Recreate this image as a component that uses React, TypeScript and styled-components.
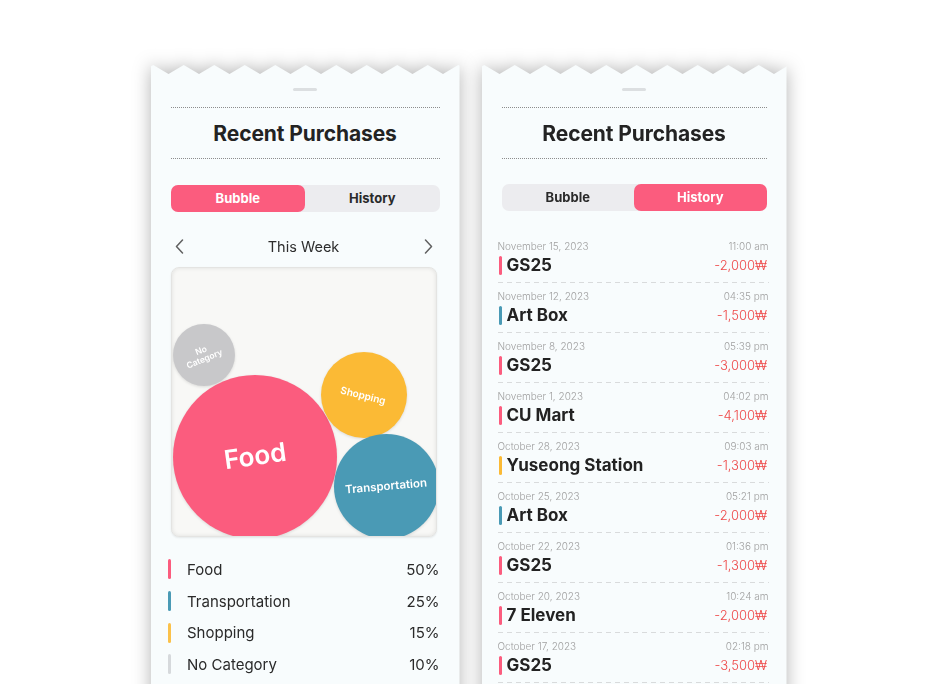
import React from "react";
import styled, { createGlobalStyle } from "styled-components";

const PINK = "#FB5C7E";
const BLUE = "#4A9AB5";
const YELLOW = "#FBBA35";
const GREY = "#C8C8CA";

const GlobalStyle = createGlobalStyle`
  html, body { margin: 0; padding: 0; background: #ffffff; }
  body {
    width: 937px;
    height: 684px;
    overflow: hidden;
    font-family: Inter, "Noto Sans", sans-serif;
    -webkit-font-smoothing: antialiased;
  }
  * { box-sizing: border-box; }
`;

function zigzag(width: number, period = 30.5, offset = 18, depth = 9): string {
  const yAt = (x: number) => {
    const d = (((x - offset) % period) + period) % period;
    const dist = Math.min(d, period - d);
    return depth * (1 - dist / (period / 2));
  };
  const pts: string[] = [`0px ${yAt(0).toFixed(2)}px`];
  const half = period / 2;
  let k = Math.ceil((0 - offset) / half);
  for (let x = offset + k * half; x < width; x = offset + ++k * half) {
    if (x <= 0) continue;
    pts.push(`${x.toFixed(2)}px ${yAt(x).toFixed(2)}px`);
  }
  pts.push(`${width}px ${yAt(width).toFixed(2)}px`);
  pts.push(`${width}px 100%`, `0px 100%`);
  return pts.join(", ");
}

const Page = styled.div`
  display: flex;
  justify-content: center;
  align-items: flex-start;
  gap: 22px;
  padding-top: 65px;
  height: 684px;
  overflow: hidden;
`;

const CardShadow = styled.div`
  filter: drop-shadow(0 0 9px rgba(0, 0, 0, 0.3));
`;

const Card = styled.div<{ $width: number }>`
  width: ${(p) => p.$width}px;
  height: 660px;
  background: #f8fcfd;
  clip-path: polygon(${(p) => zigzag(p.$width)});
  display: flex;
  flex-direction: column;
  padding: 0 20px;
`;

const Handle = styled.div`
  width: 24px;
  height: 3px;
  border-radius: 2px;
  background: #dcdfe1;
  margin: 23px auto 0;
`;

const dotted = "linear-gradient(to right, #8d8d8d 50%, transparent 50%)";

const TitleBlock = styled.div`
  margin-top: 16px;
  height: 52px;
  display: flex;
  align-items: center;
  justify-content: center;
  background-image: ${dotted}, ${dotted};
  background-size: 2px 1px, 2px 1px;
  background-position: left top, left bottom;
  background-repeat: repeat-x, repeat-x;
`;

const Title = styled.h1`
  margin: 0;
  font-size: 21px;
  font-weight: 700;
  color: #232323;
  letter-spacing: -0.1px;
`;

const Segmented = styled.div<{ $shift?: number }>`
  margin-top: ${(p) => 26 - (p.$shift ?? 0)}px;
  margin-bottom: ${(p) => p.$shift ?? 0}px;
  height: 27px;
  display: grid;
  grid-template-columns: 1fr 1fr;
  background: #ececef;
  border-radius: 7px;
`;

const SegButton = styled.div<{ $active?: boolean }>`
  display: flex;
  align-items: center;
  justify-content: center;
  border-radius: 7px;
  font-size: 13px;
  font-weight: 700;
  padding-bottom: 1px;
  background: ${(p) => (p.$active ? PINK : "transparent")};
  color: ${(p) => (p.$active ? "#ffffff" : "#2a2a2a")};
`;

const WeekRow = styled.div`
  margin-top: 22.5px;
  height: 24px;
  display: flex;
  align-items: center;
  justify-content: space-between;
  padding: 0 7px 0 4px;
`;

const WeekLabel = styled.span`
  font-size: 14.5px;
  color: #2d2d2d;
`;

const Chevron = ({ dir }: { dir: "left" | "right" }) => (
  <svg width="9" height="15" viewBox="0 0 9 15" fill="none">
    <polyline
      points={dir === "left" ? "7.5,1 1.5,7.5 7.5,14" : "1.5,1 7.5,7.5 1.5,14"}
      stroke="#606060"
      strokeWidth="1.5"
      strokeLinecap="round"
      strokeLinejoin="round"
    />
  </svg>
);

const BubblePanel = styled.div`
  position: relative;
  margin-top: 8.5px;
  margin-right: 3px;
  height: 270px;
  background: #f8f8f6;
  border: 1px solid #e4e4e2;
  border-radius: 8px;
  box-shadow: inset 0 0 4px rgba(0, 0, 0, 0.1), 0 1px 2px rgba(0, 0, 0, 0.08);
  overflow: hidden;
`;

const Bubble = styled.div<{ $x: number; $y: number; $size: number; $color: string }>`
  position: absolute;
  left: ${(p) => p.$x}px;
  top: ${(p) => p.$y}px;
  width: ${(p) => p.$size}px;
  height: ${(p) => p.$size}px;
  border-radius: 50%;
  background: ${(p) => p.$color};
  box-shadow: 0 1px 3px rgba(0, 0, 0, 0.12);
  display: flex;
  align-items: center;
  justify-content: center;
`;

const BubbleLabel = styled.span<{ $font: number; $rotate: number }>`
  color: #ffffff;
  font-size: ${(p) => p.$font}px;
  font-weight: 600;
  line-height: 1.1;
  text-align: center;
  transform: rotate(${(p) => p.$rotate}deg);
  white-space: nowrap;
`;

const Legend = styled.div`
  margin: 16.5px 0 0 -3px;
  display: flex;
  flex-direction: column;
`;

const LegendRow = styled.div`
  height: 31.7px;
  display: flex;
  align-items: center;
  font-size: 15px;
  color: #2a2a2a;
`;

const LegendBar = styled.span<{ $color: string }>`
  width: 3px;
  height: 20px;
  border-radius: 2px;
  background: ${(p) => p.$color};
  margin-right: 16.5px;
`;

const LegendName = styled.span`
  flex: 1;
`;

const List = styled.div`
  margin: 20.5px -2px 0 -4px;
  display: flex;
  flex-direction: column;
`;

const Item = styled.div`
  height: 50px;
  padding-top: 6.5px;
  background-image: linear-gradient(to right, #d9dbdc 55%, transparent 55%);
  background-size: 9px 1px;
  background-position: left bottom;
  background-repeat: repeat-x;
`;

const DateRow = styled.div`
  height: 13px;
  display: flex;
  justify-content: space-between;
  align-items: center;
  font-size: 10px;
  font-weight: 300;
  color: #a0a0a0;
`;

const NameRow = styled.div`
  margin-top: 1px;
  height: 24px;
  display: flex;
  align-items: center;
`;

const ItemBar = styled.span<{ $color: string }>`
  width: 2.5px;
  height: 19px;
  border-radius: 2px;
  margin-left: 1.5px;
  background: ${(p) => p.$color};
`;

const ItemName = styled.span`
  flex: 1;
  margin-left: 5px;
  font-size: 17px;
  font-weight: 700;
  color: #222222;
`;

const Amount = styled.span`
  font-size: 13px;
  font-weight: 300;
  color: #ee4747;
  padding-right: 1.5px;
`;

const bubbles = [
  { label: "No\nCategory", x: 1, y: 56, size: 62, color: GREY, font: 8.5, rotate: -22 },
  { label: "Food", x: 1.5, y: 106.5, size: 164, color: PINK, font: 26, rotate: -8 },
  { label: "Shopping", x: 149, y: 84, size: 86, color: YELLOW, font: 10, rotate: 14 },
  { label: "Transportation", x: 162, y: 166, size: 105, color: BLUE, font: 11.5, rotate: -5 },
];

const legend = [
  { name: "Food", pct: "50%", color: PINK },
  { name: "Transportation", pct: "25%", color: BLUE },
  { name: "Shopping", pct: "15%", color: "#FBC14A" },
  { name: "No Category", pct: "10%", color: "#D6D9DC" },
];

const history = [
  { date: "November 15, 2023", time: "11:00 am", name: "GS25", amount: "-2,000₩", color: PINK },
  { date: "November 12, 2023", time: "04:35 pm", name: "Art Box", amount: "-1,500₩", color: BLUE },
  { date: "November 8, 2023", time: "05:39 pm", name: "GS25", amount: "-3,000₩", color: PINK },
  { date: "November 1, 2023", time: "04:02 pm", name: "CU Mart", amount: "-4,100₩", color: PINK },
  { date: "October 28, 2023", time: "09:03 am", name: "Yuseong Station", amount: "-1,300₩", color: YELLOW },
  { date: "October 25, 2023", time: "05:21 pm", name: "Art Box", amount: "-2,000₩", color: BLUE },
  { date: "October 22, 2023", time: "01:36 pm", name: "GS25", amount: "-1,300₩", color: PINK },
  { date: "October 20, 2023", time: "10:24 am", name: "7 Eleven", amount: "-2,000₩", color: PINK },
  { date: "October 17, 2023", time: "02:18 pm", name: "GS25", amount: "-3,500₩", color: PINK },
];

const Header = ({ active }: { active: "bubble" | "history" }) => (
  <>
    <Handle />
    <TitleBlock>
      <Title>Recent Purchases</Title>
    </TitleBlock>
    <Segmented $shift={active === "history" ? 1 : 0}>
      <SegButton $active={active === "bubble"}>Bubble</SegButton>
      <SegButton $active={active === "history"}>History</SegButton>
    </Segmented>
  </>
);

export default function App() {
  return (
    <>
      <GlobalStyle />
      <Page>
        <CardShadow>
          <Card $width={309}>
            <Header active="bubble" />
            <WeekRow>
              <Chevron dir="left" />
              <WeekLabel>This Week</WeekLabel>
              <Chevron dir="right" />
            </WeekRow>
            <BubblePanel>
              {bubbles.map((b) => (
                <Bubble key={b.label} $x={b.x} $y={b.y} $size={b.size} $color={b.color}>
                  <BubbleLabel $font={b.font} $rotate={b.rotate}>
                    {b.label.split("\n").map((line, i) => (
                      <React.Fragment key={i}>
                        {i > 0 && <br />}
                        {line}
                      </React.Fragment>
                    ))}
                  </BubbleLabel>
                </Bubble>
              ))}
            </BubblePanel>
            <Legend>
              {legend.map((l) => (
                <LegendRow key={l.name}>
                  <LegendBar $color={l.color} />
                  <LegendName>{l.name}</LegendName>
                  <span>{l.pct}</span>
                </LegendRow>
              ))}
            </Legend>
          </Card>
        </CardShadow>
        <CardShadow>
          <Card $width={305}>
            <Header active="history" />
            <List>
              {history.map((h, i) => (
                <Item key={i}>
                  <DateRow>
                    <span>{h.date}</span>
                    <span>{h.time}</span>
                  </DateRow>
                  <NameRow>
                    <ItemBar $color={h.color} />
                    <ItemName>{h.name}</ItemName>
                    <Amount>{h.amount}</Amount>
                  </NameRow>
                </Item>
              ))}
            </List>
          </Card>
        </CardShadow>
      </Page>
    </>
  );
}
